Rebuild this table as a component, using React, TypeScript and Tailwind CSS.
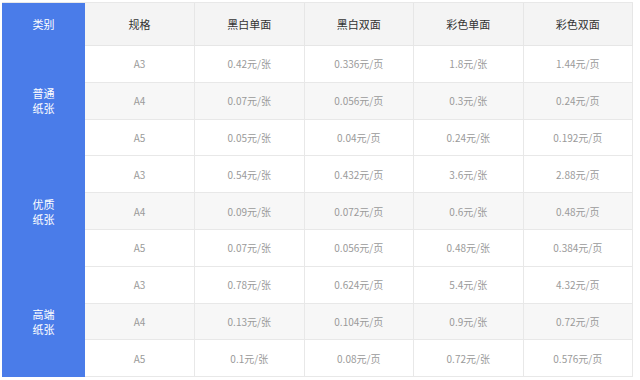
import React from 'react';

type Row = { size: string; prices: string[] };
type Group = { name: string[]; rows: Row[] };

const groups: Group[] = [
  {
    name: ['普通', '纸张'],
    rows: [
      { size: 'A3', prices: ['0.42元/张', '0.336元/页', '1.8元/张', '1.44元/页'] },
      { size: 'A4', prices: ['0.07元/张', '0.056元/页', '0.3元/张', '0.24元/页'] },
      { size: 'A5', prices: ['0.05元/张', '0.04元/页', '0.24元/张', '0.192元/页'] },
    ],
  },
  {
    name: ['优质', '纸张'],
    rows: [
      { size: 'A3', prices: ['0.54元/张', '0.432元/页', '3.6元/张', '2.88元/页'] },
      { size: 'A4', prices: ['0.09元/张', '0.072元/页', '0.6元/张', '0.48元/页'] },
      { size: 'A5', prices: ['0.07元/张', '0.056元/页', '0.48元/张', '0.384元/页'] },
    ],
  },
  {
    name: ['高端', '纸张'],
    rows: [
      { size: 'A3', prices: ['0.78元/张', '0.624元/页', '5.4元/张', '4.32元/页'] },
      { size: 'A4', prices: ['0.13元/张', '0.104元/页', '0.9元/张', '0.72元/页'] },
      { size: 'A5', prices: ['0.1元/张', '0.08元/页', '0.72元/张', '0.576元/页'] },
    ],
  },
];

const headers = ['规格', '黑白单面', '黑白双面', '彩色单面', '彩色双面'];

export default function App() {
  return (
    <div className="w-[640px] h-[380px] bg-white pt-[2px] pl-[2px] font-['Noto_Sans_CJK_SC','Noto_Sans',sans-serif]">
      <div className="grid w-[631px] grid-cols-[83px_110px_repeat(4,1fr)] grid-rows-[43px_repeat(9,36.8px)] border-t border-[#e8e8e8]">
        <div className="bg-[#4a7ce9] text-white text-[11px] flex items-center justify-center">类别</div>
        {headers.map((h) => (
          <div
            key={h}
            className="bg-[#f4f4f4] text-[#333] text-[11px] flex items-center justify-center border-r border-b border-[#e6e6e6]"
          >
            {h}
          </div>
        ))}
        {groups.map((g, gi) => (
          <React.Fragment key={gi}>
            <div
              className="row-span-3 bg-[#4a7ce9] text-white text-[11px] leading-[15px] flex flex-col items-center justify-center"
              style={{ gridRow: `${2 + gi * 3} / span 3`, gridColumn: '1' }}
            >
              <span>{g.name[0]}</span>
              <span>{g.name[1]}</span>
            </div>
            {g.rows.map((r, ri) => {
              const bg = ri === 1 ? 'bg-[#f7f7f7]' : 'bg-white';
              return (
                <React.Fragment key={ri}>
                  <div className={`${bg} text-[#9a9a9a] text-[10px] flex items-center justify-center border-r border-b border-[#e8e8e8]`}>
                    {r.size}
                  </div>
                  {r.prices.map((p, pi) => (
                    <div
                      key={pi}
                      className={`${bg} text-[#9a9a9a] text-[10px] flex items-center justify-center border-r border-b border-[#e8e8e8]`}
                    >
                      {p}
                    </div>
                  ))}
                </React.Fragment>
              );
            })}
          </React.Fragment>
        ))}
      </div>
    </div>
  );
}
